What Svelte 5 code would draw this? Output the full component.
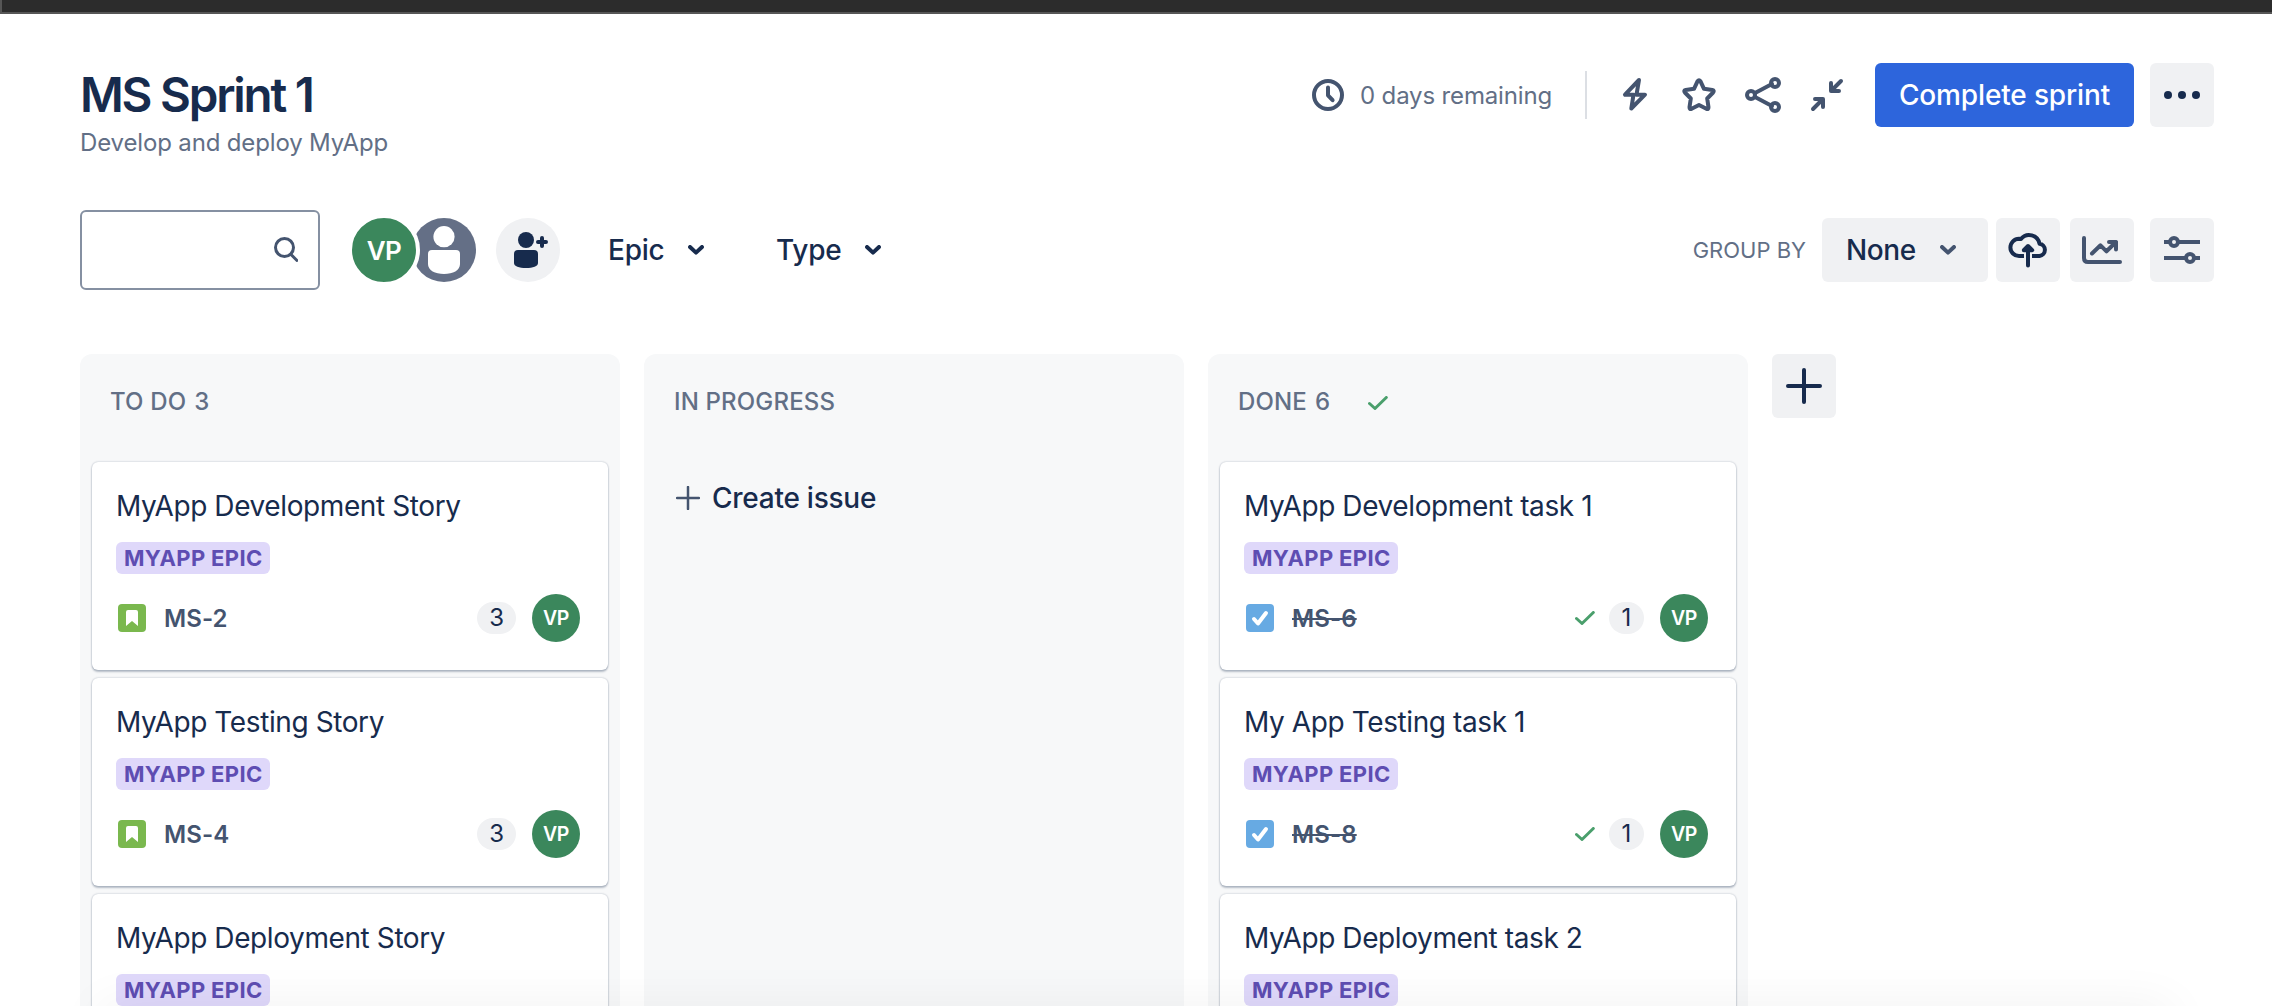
<script lang="ts">
  type Issue = { title: string; key: string; points: number };
  type Column = { name: string; count?: number; done?: boolean; issues: Issue[] };

  const columns: Column[] = [
    {
      name: 'TO DO',
      count: 3,
      issues: [
        { title: 'MyApp Development Story', key: 'MS-2', points: 3 },
        { title: 'MyApp Testing Story', key: 'MS-4', points: 3 },
        { title: 'MyApp Deployment Story', key: '', points: 0 }
      ]
    },
    { name: 'IN PROGRESS', issues: [] },
    {
      name: 'DONE',
      count: 6,
      done: true,
      issues: [
        { title: 'MyApp Development task 1', key: 'MS-6', points: 1 },
        { title: 'My App Testing task 1', key: 'MS-8', points: 1 },
        { title: 'MyApp Deployment task 2', key: '', points: 0 }
      ]
    }
  ];
</script>

{#snippet chevron()}
  <svg class="chevron" width="16" height="10" viewBox="0 0 16 10"><path d="M2 2l6 5.6L14 2" /></svg>
{/snippet}

{#snippet tick()}
  <svg class="tick" width="20" height="14" viewBox="0 0 20 14"><path d="M1.5 7.5l5.500 5L18.300 1.500" /></svg>
{/snippet}

<div class="page">
  <div class="chrome"></div>

  <header>
    <div class="heading">
      <h1>MS Sprint 1</h1>
      <p>Develop and deploy MyApp</p>
    </div>
    <div class="actions">
      <svg class="line clock" width="32" height="32" viewBox="0 0 32 32">
        <circle cx="16" cy="16" r="14" /><path d="M16 8.500v7.800l4.600 4.900" />
      </svg>
      <span class="remaining">0 days remaining</span>
      <span class="divider"></span>
      <svg class="line" width="48" height="48" viewBox="0 0 48 48">
        <path d="M28 9L14 23.700h8.500L20.300 37.500 34 23.700h-8.500z" />
      </svg>
      <svg class="line" width="48" height="48" viewBox="0 0 48 48">
        <path d="M22.600 10.200q1.400-2 2.800 0l3.600 7.600 8.300 1.200q2.400.600.800 2.500l-5.900 6 1.300 8.700q.1 2.400-2.100 1.600L24 34l-7.400 3.800q-2.200.800-2.100-1.600l1.300-8.700-5.900-6q-1.600-1.900.8-2.500l8.300-1.200z" />
      </svg>
      <svg class="line" width="48" height="48" viewBox="0 0 48 48">
        <path d="M16 22l17-9M16 26l17 9" />
        <circle cx="12" cy="24" r="4" /><circle cx="36" cy="12" r="4" /><circle cx="36" cy="36" r="4" />
      </svg>
      <svg class="line" width="48" height="48" viewBox="0 0 48 48">
        <path d="M38 10l-9 9M28 12v8h8M10 38l9-9M20 36v-8h-8" />
      </svg>
      <button class="primary">Complete sprint</button>
      <button class="square" aria-label="More">
        <svg width="36" height="8" viewBox="0 0 36 8"><circle cx="4" cy="4" r="4" /><circle cx="18" cy="4" r="4" /><circle cx="32" cy="4" r="4" /></svg>
      </button>
    </div>
  </header>

  <div class="toolbar">
    <div class="search">
      <svg class="line" width="24" height="26" viewBox="0 0 24 26"><circle cx="10.500" cy="10.500" r="9" /><path d="M17 17.500l6 6" /></svg>
    </div>
    <div class="people">
      <span class="avatar big">VP</span>
      <svg class="person" width="64" height="64" viewBox="0 0 64 64">
        <circle class="disc" cx="32" cy="32" r="32" />
        <circle cx="32" cy="18.700" r="10.600" />
        <path d="M16 36q0-4 4-4h24q4 0 4 4v10c0 6.500-7 10-16 10s-16-3.500-16-10z" />
      </svg>
    </div>
    <button class="add-person" aria-label="Add people">
      <svg width="64" height="64" viewBox="0 0 64 64">
        <circle cx="30" cy="22" r="8" />
        <path d="M18 36q0-4 4-4h16q4 0 4 4v9c0 3.500-5 5-12 5s-12-1.500-12-5z" />
        <path class="plus" d="M46 20v8M42 24h8" />
      </svg>
    </button>
    <button class="filter epic">Epic {@render chevron()}</button>
    <button class="filter">Type {@render chevron()}</button>

    <div class="view">
      <span class="group">GROUP BY</span>
      <button class="select">None {@render chevron()}</button>
      <button class="square cloud" aria-label="Export">
        <svg class="line dark" width="48" height="48" viewBox="0 0 48 48">
          <path class="flat" d="M20 30h-5a8.600 8.600 0 0 1 0-17.200l2 .2A10.500 10.500 0 0 1 35.500 17.700a6.200 6.200 0 0 1 0 12.300H28" />
          <path d="M24 39.500V22M19.800 24.200L24 20l4.200 4.200z" />
        </svg>
      </button>
      <button class="square chart" aria-label="Insights">
        <svg class="line" width="48" height="48" viewBox="0 0 48 48">
          <path d="M6 12v20q0 4 4 4h32M14 27.500l8.500-8.200 6 6L38 16M31 16h7v7.500" />
        </svg>
      </button>
      <button class="square" aria-label="View settings">
        <svg class="line flat" width="48" height="48" viewBox="0 0 48 48">
          <path d="M6 16h6M20 16h22M6 32h22M36 32h6" />
          <circle cx="16" cy="16" r="4" /><circle cx="32" cy="32" r="4" />
        </svg>
      </button>
    </div>
  </div>

  <main>
    {#each columns as column}
      <section>
        <h2>
          <span>{column.name}</span>
          {#if column.count}<span class="count">{column.count}</span>{/if}
          {#if column.done}{@render tick()}{/if}
        </h2>
        {#each column.issues as issue}
          <article>
            <h3>{issue.title}</h3>
            <span class="tag">MYAPP EPIC</span>
            {#if issue.key}
              <footer>
                {#if column.done}
                  <svg class="type task" width="28" height="28" viewBox="0 0 28 28"><rect width="28" height="28" rx="4" /><path d="M8 15l4 4.500L20 9" /></svg>
                {:else}
                  <svg class="type story" width="28" height="28" viewBox="0 0 28 28"><rect width="28" height="28" rx="4" /><path d="M8 8q0-2 2-2h8q2 0 2 2v14l-6-5-6 5z" /></svg>
                {/if}
                <span class="key" class:struck={column.done}>{issue.key}</span>
                <span class="spacer"></span>
                {#if column.done}{@render tick()}{/if}
                <span class="points">{issue.points}</span>
                <span class="avatar">VP</span>
              </footer>
            {/if}
          </article>
        {:else}
          <button class="create">
            <svg width="24" height="24" viewBox="0 0 24 24"><path d="M12 1v22M1 12h22" /></svg>
            Create issue
          </button>
        {/each}
      </section>
    {/each}
    <button class="square add-column" aria-label="Add column">
      <svg width="36" height="36" viewBox="0 0 36 36"><path d="M18 2v32M2 18h32" /></svg>
    </button>
  </main>
  <div class="shade"></div>
</div>

<style>
  :global(body) { background: #fff; overflow: hidden; }
  .page {
    position: relative;
    box-sizing: border-box;
    width: 2272px;
    height: 1006px;
    overflow: hidden;
    font-family: Inter, 'Liberation Sans', sans-serif;
    color: #172b4d;
    display: flex;
    flex-direction: column;
  }
  h1, h2, h3, p { margin: 0; }
  svg { display: block; flex: none; }
  button { border: 0; padding: 0; margin: 0; background: none; color: inherit; font: inherit; }
  .chrome { flex: none; box-sizing: border-box; height: 14px; background: #2c2c2c; border-bottom: 2px solid #565656; border-left: 2px solid #565656; }
  header { flex: none; height: 196px; padding: 49px 58px 0 80px; box-sizing: border-box; display: flex; justify-content: space-between; align-items: flex-start; }
  .heading { padding-top: 4px; }
  h1 { font-size: 47.500px; line-height: 56px; font-weight: 600; letter-spacing: -2.200px; white-space: nowrap; }
  p { font-size: 24px; line-height: 40px; letter-spacing: -0.150px; color: #626f86; white-space: nowrap; }
  .actions { display: flex; align-items: center; height: 64px; }
  .line { fill: none; stroke: #44546f; stroke-width: 4; stroke-linecap: round; stroke-linejoin: round; }
  .actions .line + .line { margin-left: 16px; }
  .remaining { margin-left: 16px; width: 209px; font-size: 24px; letter-spacing: -0.150px; color: #626f86; white-space: nowrap; }
  .divider { width: 2px; height: 48px; background: #dcdfe4; margin: 0 24px 0 16px; }
  .primary { width: 259px; height: 64px; margin: 0 16px 0 24px; border-radius: 6px; background: #2d65dc; color: #fff; font-size: 28px; font-weight: 500; letter-spacing: -0.150px; }
  .square { flex: none; width: 64px; height: 64px; border-radius: 6px; background: #f0f1f3; display: flex; align-items: center; justify-content: center; fill: #172b4d; }

  .toolbar { flex: none; height: 80px; padding: 0 58px 0 80px; display: flex; align-items: center; }
  .search { box-sizing: border-box; width: 240px; height: 80px; border: 2px solid #8590a2; border-radius: 6px; display: flex; align-items: center; justify-content: flex-end; padding-right: 20px; }
  .search .line { stroke-width: 3; }
  .people { display: flex; margin-left: 28px; }
  .avatar { flex: none; width: 48px; height: 48px; border-radius: 50%; background: #3b875c; color: #fff; font-size: 19.500px; font-weight: 600; letter-spacing: -0.500px; display: flex; align-items: center; justify-content: center; }
  .avatar.big { position: relative; width: 64px; height: 64px; border: 4px solid #fff; font-size: 26px; }
  .person { margin: 4px 0 0 -8px; fill: #fff; }
  .disc { fill: #646f86; }
  .add-person { margin-left: 20px; border-radius: 50%; background: #f0f1f3; fill: #172b4d; }
  .plus { stroke: #172b4d; stroke-width: 4; stroke-linecap: round; }
  .filter { display: flex; align-items: center; font-size: 28px; font-weight: 500; letter-spacing: -0.250px; width: 168px; white-space: nowrap; }
  .filter.epic { margin-left: 48px; }
  .filter .chevron { margin-left: 24px; }
  .chevron { fill: none; stroke: #172b4d; stroke-width: 4; stroke-linecap: round; stroke-linejoin: round; }
  .view { margin-left: auto; display: flex; align-items: center; }
  .group { font-size: 22px; color: #626f86; margin-right: 16px; }
  .select { width: 166px; height: 64px; box-sizing: border-box; padding: 0 32px 0 24px; border-radius: 6px; background: #f0f1f3; display: flex; align-items: center; justify-content: space-between; font-size: 28px; font-weight: 500; letter-spacing: -0.400px; }
  .select .chevron { stroke: #44546f; }
  .cloud { margin: 0 10px 0 8px; }
  .chart { margin-right: 16px; }
  .dark { stroke: #172b4d; }
  .flat { stroke-linecap: butt; }

  main { flex: none; display: flex; align-items: flex-start; gap: 24px; padding: 64px 0 0 80px; }
  section { box-sizing: border-box; width: 540px; height: 700px; padding: 0 12px; border-radius: 12px 12px 0 0; background: #f7f8f9; }
  h2 { height: 108px; box-sizing: border-box; padding: 32px 0 0 18px; display: flex; font-size: 24px; line-height: 32px; font-weight: 500; letter-spacing: 0.150px; color: #626f86; white-space: nowrap; }
  .count { margin-left: 8px; }
  h2 .tick { margin: 10px 0 0 38px; }
  .tick { fill: none; stroke: #4a9f6c; stroke-width: 3; stroke-linecap: round; stroke-linejoin: round; }
  article { box-sizing: border-box; height: 208px; margin-bottom: 8px; padding: 24px 28px 0 24px; border-radius: 6px; background: #fff; box-shadow: 0 2px 2px rgba(9, 30, 66, 0.25), 0 0 2px rgba(9, 30, 66, 0.31); }
  h3 { font-size: 28px; line-height: 40px; font-weight: 400; letter-spacing: -0.400px; white-space: nowrap; }
  .tag { display: block; width: 154px; height: 32px; margin-top: 16px; box-sizing: border-box; padding-left: 8px; border-radius: 6px; background: #dfd8fa; color: #5e4db2; font-size: 22px; line-height: 32px; font-weight: 700; letter-spacing: 0.350px; white-space: nowrap; }
  footer { display: flex; align-items: center; height: 48px; margin-top: 20px; }
  .type { margin-left: 2px; }
  .story { fill: #7ab84e; }
  .story path { fill: #fff; }
  .task { fill: #67aae3; }
  .task path { fill: none; stroke: #fff; stroke-width: 4; stroke-linecap: round; stroke-linejoin: round; }
  .key { margin-left: 18px; font-size: 24px; font-weight: 600; letter-spacing: 0.100px; color: #44546f; }
  .struck { text-decoration: line-through; }
  .spacer { flex: 1; }
  .points { height: 32px; min-width: 11px; text-align: center; padding: 0 12px; margin: 0 16px 0 14px; border-radius: 16px; background: #f0f1f3; font-size: 24px; line-height: 32px; }
  .create { display: flex; align-items: center; gap: 12px; height: 40px; margin: 16px 0 0 20px; font-size: 28px; font-weight: 500; letter-spacing: -0.250px; white-space: nowrap; }
  .create path { stroke: #44546f; stroke-width: 2.500; stroke-linecap: round; }
  .add-column path { stroke: #172b4d; stroke-width: 4; stroke-linecap: round; }
  /* Soft shadow rising from below the lower edge of the window. */
  .shade { position: absolute; left: 100px; right: 100px; bottom: -40px; height: 40px; box-shadow: 0 0 50px rgba(0, 0, 0, 0.06); pointer-events: none; }
</style>
